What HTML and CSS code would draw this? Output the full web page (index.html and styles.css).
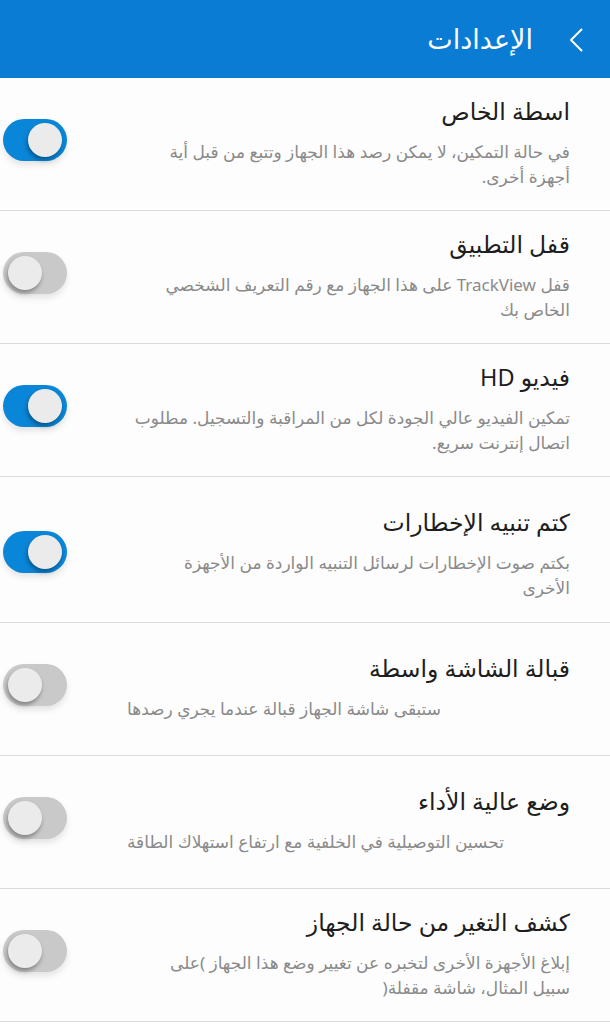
FILE: index.html
```html
<!DOCTYPE html>
<html lang="ar" dir="rtl">
<head>
<meta charset="utf-8">
<title>الإعدادات</title>
<link rel="stylesheet" href="styles.css">
</head>
<body>
<header class="appbar">
  <svg class="back" width="14" height="24" viewBox="0 0 14 24" aria-hidden="true">
    <path d="M12.5 1.5 L2 12 L12.5 22.5" fill="none" stroke="#ffffff" stroke-width="2" stroke-linecap="round" stroke-linejoin="round"/>
  </svg>
  <h1 class="appbar-title">الإعدادات</h1>
</header>
<main class="list">
  <div class="row">
    <div class="text">
      <div class="title">اسطة الخاص</div>
      <div class="desc">في حالة التمكين، لا يمكن رصد هذا الجهاز وتتبع من قبل أية<br>أجهزة أخرى.</div>
    </div>
    <div class="switch on"><span class="knob"></span></div>
  </div>
  <div class="row">
    <div class="text">
      <div class="title">قفل التطبيق</div>
      <div class="desc">قفل TrackView على هذا الجهاز مع رقم التعريف الشخصي<br>الخاص بك</div>
    </div>
    <div class="switch"><span class="knob"></span></div>
  </div>
  <div class="row">
    <div class="text">
      <div class="title">فيديو HD</div>
      <div class="desc">تمكين الفيديو عالي الجودة لكل من المراقبة والتسجيل. مطلوب<br>اتصال إنترنت سريع.</div>
    </div>
    <div class="switch on"><span class="knob"></span></div>
  </div>
  <div class="row row-tall">
    <div class="text">
      <div class="title">كتم تنبيه الإخطارات</div>
      <div class="desc">بكتم صوت الإخطارات لرسائل التنبيه الواردة من الأجهزة<br>الأخرى</div>
    </div>
    <div class="switch on"><span class="knob"></span></div>
  </div>
  <div class="row">
    <div class="text">
      <div class="title">قبالة الشاشة واسطة</div>
      <div class="desc desc-left">ستبقى شاشة الجهاز قبالة عندما يجري رصدها</div>
    </div>
    <div class="switch"><span class="knob"></span></div>
  </div>
  <div class="row">
    <div class="text">
      <div class="title">وضع عالية الأداء</div>
      <div class="desc desc-left">تحسين التوصيلية في الخلفية مع ارتفاع استهلاك الطاقة</div>
    </div>
    <div class="switch"><span class="knob"></span></div>
  </div>
  <div class="row">
    <div class="text">
      <div class="title">كشف التغير من حالة الجهاز</div>
      <div class="desc">إبلاغ الأجهزة الأخرى لتخبره عن تغيير وضع هذا الجهاز <bdi dir="ltr">(</bdi>على<br>سبيل المثال، شاشة مقفلة<bdi dir="ltr">)</bdi></div>
    </div>
    <div class="switch"><span class="knob"></span></div>
  </div>
</main>
</body>
</html>
```
FILE: styles.css
```css
* { box-sizing: border-box; }
html, body { margin: 0; padding: 0; }
body {
  width: 610px;
  background: #fdfdfd;
  font-family: "Noto Sans", "DejaVu Sans", sans-serif;
  color: #1e1e1e;
}
.appbar {
  height: 78px;
  background: #0a7cd4;
  display: flex;
  align-items: center;
  padding-right: 27px;
  gap: 36px;
}
.back { display: block; flex: none; margin-top: 2px; }
.appbar-title {
  margin: 0;
  font-size: 27px;
  font-weight: 400;
  color: #ffffff;
  line-height: 34px;
}
.list { display: flex; flex-direction: column; }
.row {
  min-height: 133px;
  display: flex;
  align-items: center;
  gap: 60px;
  padding: 0 40px 0 3px;
  border-bottom: 1.5px solid #dcdcdc;
}
.row-tall { min-height: 146px; padding-top: 12px; }
.text { flex: 1; min-width: 0; margin-bottom: 6px; }
.title {
  font-size: 23.5px;
  line-height: 34px;
  color: #1e1e1e;
}
.desc {
  margin-top: 11px;
  font-size: 17px;
  line-height: 25px;
  color: #8a8a8a;
  white-space: nowrap;
}
.desc-left { text-align: left; }
.switch {
  flex: none;
  width: 64px;
  height: 42px;
  border-radius: 21px;
  background: #c9c9c9;
  display: flex;
  align-items: center;
  justify-content: flex-end;
  padding: 0 5px;
  margin-bottom: 8px;
  box-shadow: 0 4px 6px rgba(0, 0, 0, 0.10);
}
.switch.on {
  background: #0a86d8;
  justify-content: flex-start;
}
.knob {
  width: 34px;
  height: 34px;
  border-radius: 50%;
  background: #ebebeb;
  box-shadow: -1px 3px 4px rgba(0, 0, 0, 0.35);
}
```
